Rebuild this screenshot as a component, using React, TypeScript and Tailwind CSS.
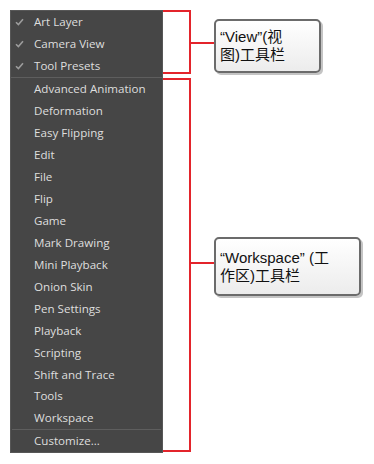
import React from 'react';

const viewItems = ['Art Layer', 'Camera View', 'Tool Presets'];
const workspaceItems = [
  'Advanced Animation',
  'Deformation',
  'Easy Flipping',
  'Edit',
  'File',
  'Flip',
  'Game',
  'Mark Drawing',
  'Mini Playback',
  'Onion Skin',
  'Pen Settings',
  'Playback',
  'Scripting',
  'Shift and Trace',
  'Tools',
  'Workspace',
];

const Tick = () => (
  <svg width="9" height="8" viewBox="0 0 9 8" className="shrink-0">
    <path d="M1 4.2 L3.4 6.6 L8 1.2" fill="none" stroke="#9c9c9c" strokeWidth="1.6" />
  </svg>
);

const MenuItem = ({ label, checked }: { label: string; checked?: boolean }) => (
  <div className="flex h-[22px] items-center">
    <div className="flex w-[23px] justify-start pl-[4px]">{checked && <Tick />}</div>
    <span className="text-[11.6px] text-[#dedede]">{label}</span>
  </div>
);

const Callout = ({ lines, className }: { lines: string[]; className: string }) => (
  <div
    className={`flex items-center rounded-[5px] border-2 border-[#6b6b6b] bg-gradient-to-b from-white to-[#ececec] pl-[4px] shadow-[2px_2px_0_#c4c4c4] ${className}`}
    style={{ fontFamily: '"Liberation Sans", "Noto Sans CJK SC", sans-serif' }}
  >
    <p className="text-[15px] leading-[18px] text-[#111]">
      {lines.map((l, i) => (
        <React.Fragment key={i}>
          {i > 0 && <br />}
          {l}
        </React.Fragment>
      ))}
    </p>
  </div>
);

const App: React.FC = () => {
  return (
    <div className="flex h-[464px] w-[374px] bg-white pl-[10px] pt-[10px]">
      {/* Toolbar menu */}
      <div
        className="flex h-[443px] w-[153px] flex-col border border-[#575757] bg-[#464646]"
        style={{ fontFamily: '"Open Sans", "Noto Sans", sans-serif' }}
      >
        {viewItems.map((l) => (
          <MenuItem key={l} label={l} checked />
        ))}
        <div className="h-px bg-[#5e5e5e]" />
        {workspaceItems.map((l) => (
          <MenuItem key={l} label={l} />
        ))}
        <div className="mx-px h-px bg-[#5e5e5e]" />
        <MenuItem label="Customize..." />
      </div>

      {/* Annotations */}
      <div className="flex flex-col">
        <div className="flex items-start">
          <div className="h-[64px] w-[28px] border-y-2 border-r-2 border-[#e3242b]" />
          <div className="w-[23px] pt-[32px]">
            <div className="h-[2px] bg-[#e3242b]" />
          </div>
          <Callout lines={['“View”(视', '图)工具栏']} className="mt-[9px] h-[54px] w-[107px]" />
        </div>
        <div className="mt-[4px] flex items-start">
          <div className="h-[374px] w-[28px] border-y-2 border-r-2 border-[#e3242b]" />
          <div className="w-[23px] pt-[184px]">
            <div className="h-[2px] bg-[#e3242b]" />
          </div>
          <Callout lines={['“Workspace” (工', '作区)工具栏']} className="mt-[159px] h-[59px] w-[147px]" />
        </div>
      </div>
    </div>
  );
};

export default App;
